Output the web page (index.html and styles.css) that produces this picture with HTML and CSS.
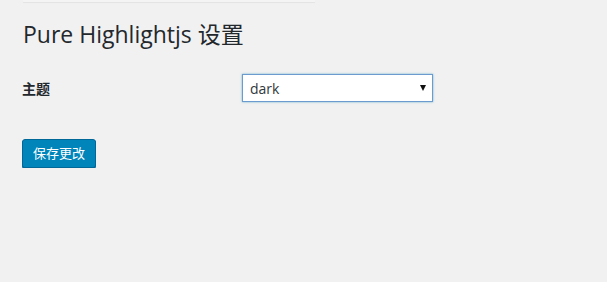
FILE: index.html
```html
<!DOCTYPE html>
<html lang="zh-CN">
<head>
<meta charset="utf-8">
<title>Pure Highlightjs 设置</title>
<link rel="stylesheet" href="styles.css">
</head>
<body>
<div class="wrap">
  <div class="notice-edge"></div>
  <h1 class="title">Pure Highlightjs 设置</h1>
  <form class="settings">
    <div class="row">
      <label class="row-label" for="theme">主题</label>
      <div class="row-field">
        <div class="select-wrap">
          <select id="theme" class="select">
            <option>dark</option>
            <option>default</option>
            <option>github</option>
          </select>
          <span class="select-arrow"></span>
        </div>
      </div>
    </div>
    <div class="submit-row">
      <button type="button" class="button-primary">保存更改</button>
    </div>
  </form>
</div>
</body>
</html>
```

FILE: styles.css
```css
html, body {
  margin: 0;
  padding: 0;
  background: #f1f1f1;
}
body {
  font-family: "Open Sans", "Noto Sans CJK SC", sans-serif;
  color: #23282d;
  font-size: 13px;
}
.wrap {
  padding: 0 0 0 22px;
  width: 585px;
}
.notice-edge {
  width: 292px;
  height: 2px;
  margin-left: 1px;
  background: #f4f4f4;
  box-shadow: 0 1px 1px rgba(0, 0, 0, 0.06);
}
.title {
  margin: 18px 0 0 1px;
  font-size: 23px;
  font-weight: 400;
  line-height: 29px;
  color: #23282d;
}
.settings {
  margin-top: 25px;
}
.row {
  display: flex;
  align-items: center;
}
.row-label {
  width: 220px;
  font-size: 14px;
  font-weight: 700;
  color: #23282d;
  font-family: "Open Sans", "Noto Sans CJK SC", sans-serif;
}
.select-wrap {
  position: relative;
  width: 191px;
  height: 28px;
}
.select {
  -webkit-appearance: none;
  appearance: none;
  box-sizing: border-box;
  width: 191px;
  height: 28px;
  margin: 0;
  padding: 0 24px 0 7px;
  border: 1px solid #6c9ccf;
  border-radius: 0;
  box-shadow: 0 0 2px rgba(30, 140, 190, 0.6);
  background: #fff;
  font-family: "Open Sans", sans-serif;
  font-size: 14px;
  color: #32373c;
  outline: none;
}
.select-arrow {
  position: absolute;
  right: 7px;
  top: 11px;
  width: 0;
  height: 0;
  border-left: 3.5px solid transparent;
  border-right: 3.5px solid transparent;
  border-top: 6px solid #111;
  pointer-events: none;
}
.submit-row {
  margin-top: 37px;
}
.button-primary {
  box-sizing: border-box;
  height: 29px;
  padding: 0 10px 1px;
  border: 1px solid #006799;
  border-radius: 3px;
  background: #0085ba;
  box-shadow: 0 1px 0 #006799;
  color: #fff;
  font-family: "Open Sans", "Noto Sans CJK SC", sans-serif;
  font-size: 13px;
  line-height: 26px;
}
```
